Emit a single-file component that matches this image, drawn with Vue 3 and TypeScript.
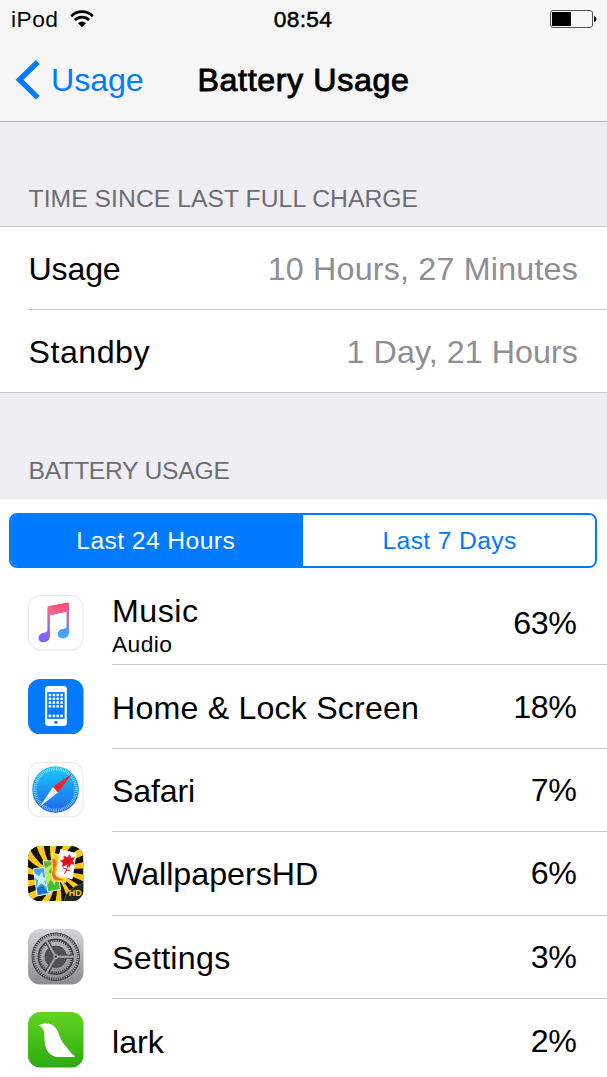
<script setup lang="ts">
import { ref } from 'vue'

interface AppRow {
  id: string
  name: string
  detail?: string
  percent: string
}

const times = [
  { id: 'usage', label: 'Usage', value: '10 Hours, 27 Minutes' },
  { id: 'standby', label: 'Standby', value: '1 Day, 21 Hours' },
]

const tabs = [
  { id: 'day', label: 'Last 24 Hours' },
  { id: 'week', label: 'Last 7 Days' },
]
const activeTab = ref('day')

const apps: AppRow[] = [
  { id: 'music', name: 'Music', detail: 'Audio', percent: '63%' },
  { id: 'home', name: 'Home & Lock Screen', percent: '18%' },
  { id: 'safari', name: 'Safari', percent: '7%' },
  { id: 'wallpapers', name: 'WallpapersHD', percent: '6%' },
  { id: 'settings', name: 'Settings', percent: '3%' },
  { id: 'lark', name: 'lark', percent: '2%' },
]

const dotCols = [21.7, 25.6, 29.4, 33.3]
const dotRows = [15.8, 19.6, 23.3, 27, 36.5]

// Curved sunburst wedges around the centre of the wallpaper icon.
const rays = Array.from({ length: 14 }, (_, i) => {
  const point = (r: number, deg: number) => {
    const t = (deg * Math.PI) / 180
    return `${(27.5 + r * Math.cos(t)).toFixed(2)} ${(28 + r * Math.sin(t)).toFixed(2)}`
  }
  const a = (i * 360) / 14
  return `M27.5 28Q${point(22, a - 12)} ${point(42, a + 8)}L${point(42, a + 21)}Q${point(22, a + 1)} 27.5 28Z`
})
</script>

<template>
  <main class="screen">
    <header class="top">
      <div class="status">
        <div class="carrier">
          <span>iPod</span>
          <svg class="wifi" width="24" height="18" viewBox="0 0 24 18">
            <path d="M1.2 6.2C7.3.2 16.7.2 22.8 6.2" />
            <path d="M4.9 10C9 6.1 15 6.1 19.1 10" />
            <path class="wifi-dot" d="M8 13.2Q12 9.8 16 13.2L12 17.2Z" />
          </svg>
        </div>
        <span class="clock">08:54</span>
        <svg class="battery" width="48" height="20" viewBox="0 0 48 20">
          <rect x="1.5" y="1.5" width="42" height="17" rx="2.5" />
          <path d="M3 3H22V17H3Z" />
          <path d="M45 7Q47.5 7.5 47.5 10T45 13Z" />
        </svg>
      </div>
      <nav class="nav">
        <a class="back">
          <svg width="26" height="40" viewBox="0 0 26 40"><path d="M23.8 2L5.5 19.8 23.8 37.6" /></svg>
          <span>Usage</span>
        </a>
        <h1>Battery Usage</h1>
      </nav>
    </header>

    <h2 class="caption caption-time">TIME SINCE LAST FULL CHARGE</h2>
    <section class="times">
      <div v-for="t in times" :key="t.id" class="time-row">
        <span :class="['label', t.id]">{{ t.label }}</span>
        <span :class="['value', t.id]">{{ t.value }}</span>
      </div>
    </section>

    <h2 class="caption caption-battery">BATTERY USAGE</h2>
    <section class="usage-list">
      <div class="segments">
        <button
          v-for="t in tabs"
          :key="t.id"
          :class="[t.id, { active: t.id === activeTab }]"
          @click="activeTab = t.id"
        >{{ t.label }}</button>
      </div>

      <div v-for="app in apps" :key="app.id" class="app-row">
        <svg class="icon" width="55.5" height="55.5" viewBox="0 0 55 55">
          <defs>
            <clipPath :id="`clip-${app.id}`"><rect width="55" height="55" rx="12" /></clipPath>
          </defs>

          <template v-if="app.id === 'music'">
            <defs>
              <linearGradient id="note" x1="0.6" y1="0" x2="0.4" y2="1">
                <stop offset="0" stop-color="#fb5067" />
                <stop offset="0.28" stop-color="#f4629a" />
                <stop offset="0.58" stop-color="#a568e8" />
                <stop offset="1" stop-color="#7a62ff" />
              </linearGradient>
              <linearGradient id="note-right" x1="0" y1="0" x2="0" y2="1">
                <stop offset="0" stop-color="#f6557f" />
                <stop offset="0.5" stop-color="#a172e6" />
                <stop offset="0.8" stop-color="#4e9df8" />
                <stop offset="1" stop-color="#3eb2fa" />
              </linearGradient>
            </defs>
            <rect x="0.6" y="0.6" width="53.8" height="53.8" rx="11.6" fill="#fff" stroke="#ececec" stroke-width="1.2" />
            <path fill="url(#note)" d="M19.2 13.2Q19.2 11.3 21 10.9L39 7.4Q40.7 7.1 40.7 8.8V16.2L21.7 20.3V40.5C21.7 44.5 19 46.7 15.5 46.8C12.2 46.9 10.3 44.9 10.5 42.1C10.7 39.2 13 37.8 16 37.3C18.4 36.9 19.2 36.5 19.2 34.2Z" />
            <path fill="url(#note-right)" d="M38.2 9.5L40.7 8.5V36.6C40.7 40.5 38.3 42.8 34.8 43C31.5 43.1 29.4 41.1 29.6 38.4C29.8 35.4 32 34 35 33.5C37.4 33.1 38.2 32.6 38.2 30.4Z" />
          </template>

          <template v-else-if="app.id === 'home'">
            <rect width="55" height="55" rx="12" fill="#027aff" />
            <rect x="17" y="7" width="21.5" height="39.5" rx="3.2" fill="#fff" />
            <rect x="19" y="13" width="17.3" height="26.5" fill="#027aff" />
            <template v-for="y in dotRows" :key="y">
              <rect v-for="x in dotCols" :key="x" :x="x - 1.2" :y="y - 1.2" width="2.5" height="2.5" fill="#fff" />
            </template>
            <rect x="25" y="9.6" width="5.5" height="0.7" fill="#a5d0ff" />
            <ellipse cx="27.7" cy="42.8" rx="1.8" ry="1.5" fill="#027aff" />
          </template>

          <template v-else-if="app.id === 'safari'">
            <defs>
              <linearGradient id="compass" x1="0" y1="0" x2="0" y2="1">
                <stop offset="0" stop-color="#1cc8fb" />
                <stop offset="1" stop-color="#1d66ee" />
              </linearGradient>
            </defs>
            <rect x="0.6" y="0.6" width="53.8" height="53.8" rx="11.6" fill="#fff" stroke="#ececec" stroke-width="1.2" />
            <circle cx="27.3" cy="27.3" r="23.1" fill="url(#compass)" />
            <circle cx="27.3" cy="27.3" r="20.4" fill="none" stroke="#d8f2ff" stroke-width="3" stroke-dasharray="0.7 1.08" opacity="0.8" />
            <path d="M43.8 11.3L29.8 30L24.7 24.8Z" fill="#fb1e24" />
            <path d="M12.2 43.6L29.8 30L24.7 24.8Z" fill="#fff" />
            <path d="M12.2 43.6L29.8 30L27.2 27.4Z" fill="#e6edf8" />
            <path d="M43.8 11.3L29.8 30L27.2 27.4Z" fill="#e02833" />
          </template>

          <template v-else-if="app.id === 'wallpapers'">
            <g clip-path="url(#clip-wallpapers)">
              <rect width="55" height="55" fill="#15120b" />
              <path v-for="d in rays" :key="d" :d="d" fill="#fcc71f" />
              <g stroke-width="0.9" stroke-linejoin="round">
                <path d="M5.5 22.5L18.5 21L22.5 47L9 49.5Z" fill="#38a7e5" stroke="#fff" />
                <path d="M7 27l4 3 3-5 1 6 5 1-4 3 3 6-6-4-4 4 1-7-3-2z" fill="#c5f0fa" />
                <path d="M9 42l5-3 6 7-10 2z" fill="#1c72c5" />
                <path d="M15 14.5L27 15L32.5 43L19.5 45.5Z" fill="#52b832" stroke="#fff" />
                <path d="M16.5 23q5-5 8-4l-4 7 8 4-2 9-4-6-3 6z" fill="#b8ee60" />
                <path d="M23.5 7L35.5 9.5L37.5 36L24 34.5Z" fill="#ffd428" stroke="#ffe97a" />
                <path d="M24 13q7 0 3 9t10 12l-10 0q-5-4-2-11z" fill="#f36a22" />
                <path d="M32.3 3.5L47.6 7.5L43.7 32.5L28.3 29.2Z" fill="#fff" stroke="#fff" />
              </g>
              <path d="M39.3 18.2L34.2 20.3 34.8 16.9 32.3 14.5 35.8 13.5 35.7 9.8 38.8 11.7 41.2 8.6 42.5 12.1 46 11.6 44.1 14.6 45.7 18 42.2 17.8 40.8 21.3Z" fill="#e21621" stroke="#e21621" stroke-width="0.8" stroke-linejoin="round" />
              <path d="M37.5 12.5l2 3 3-2m-3 2l-3 2" fill="none" stroke="#930e16" stroke-width="0.7" />
              <path d="M39.3 18Q39.5 23 36 27.5M38.5 23.2L34.5 21.5M38 24.2L41.5 24" fill="none" stroke="#d42630" stroke-width="1" />
              <path d="M35.5 55Q38 41.5 55 37V55Z" fill="#262629" />
              <path d="M35.5 55Q38 41.5 55 37" fill="none" stroke="#66625a" stroke-width="0.7" />
              <text x="40.5" y="50" textLength="12.5" lengthAdjust="spacingAndGlyphs" class="hd">HD</text>
            </g>
          </template>

          <template v-else-if="app.id === 'settings'">
            <defs>
              <linearGradient id="steel" x1="0" y1="0" x2="0" y2="1">
                <stop offset="0" stop-color="#d3d5d8" />
                <stop offset="1" stop-color="#8b8c91" />
              </linearGradient>
              <linearGradient id="gear" x1="0" y1="0" x2="0" y2="1">
                <stop offset="0" stop-color="#b2b4b7" />
                <stop offset="1" stop-color="#929397" />
              </linearGradient>
            </defs>
            <rect width="55" height="55" rx="12" fill="url(#steel)" />
            <circle cx="27.5" cy="27.5" r="24" fill="#434448" />
            <g fill="none" stroke="url(#gear)">
              <circle cx="27.5" cy="27.5" r="21.9" stroke-width="2.3" stroke-dasharray="1.15 1.144" />
              <circle cx="27.5" cy="27.5" r="19.5" stroke-width="3" />
              <circle cx="27.5" cy="27.5" r="15.4" stroke-width="1.8" stroke-dasharray="1.1 1.08" />
              <circle cx="27.5" cy="27.5" r="12.8" stroke-width="4" />
            </g>
            <circle cx="27.5" cy="27.5" r="10.9" fill="#505155" />
            <g stroke="#4c4d51" stroke-width="4.4">
              <path d="M38 27.5H45.5M22.2 18.4L18.5 12M22.2 36.6L18.5 43" />
            </g>
            <g stroke="#a8a9ac" stroke-width="1.9">
              <path d="M27.5 27.5H46M27.5 27.5L18.2 11.5M27.5 27.5L18.2 43.5" />
            </g>
            <circle cx="27.5" cy="27.5" r="2.4" fill="#a8a9ac" />
            <circle cx="27.5" cy="27.5" r="1.2" fill="#4b4c50" />
          </template>

          <template v-else>
            <defs>
              <linearGradient id="leaf" x1="0" y1="0" x2="0" y2="1">
                <stop offset="0" stop-color="#64d321" />
                <stop offset="1" stop-color="#2baa12" />
              </linearGradient>
            </defs>
            <rect width="55" height="55" rx="12" fill="url(#leaf)" />
            <path fill="#fff" d="M9.5 13Q12.2 12.7 14.2 11.8C21 10.3 26.5 12.5 29.5 19C32 25.5 33 29 38 34.5C40.8 38 43 41.5 46.5 43.8Q46.3 44.5 45 44.5H28.5C20.5 43 17.5 37.5 16.7 30.5C16.1 24.5 16.5 19 14.5 16Q13 13.8 9.5 13Z" />
          </template>
        </svg>
        <div class="app-body">
          <div class="app-text">
            <span :class="['app-name', app.id]">{{ app.name }}</span>
            <span v-if="app.detail" class="detail">{{ app.detail }}</span>
          </div>
          <span class="percent">{{ app.percent }}</span>
        </div>
      </div>
    </section>
  </main>
</template>

<style>
body {
  margin: 0;
  overflow: hidden;
}
</style>

<style scoped>
.screen {
  width: 607px;
  height: 1077px;
  overflow: hidden;
  background: #efeef4;
  color: #000;
  font-family: "Liberation Sans", Arial, sans-serif;
  font-size: 32.2px;
  line-height: 38px;
}
.top {
  box-sizing: border-box;
  height: 122px;
  background: #f6f6f6;
  border-bottom: 1px solid #b4b4b7;
}
.status {
  display: grid;
  grid-template-columns: 1fr auto 1fr;
  align-items: center;
  height: 38px;
  padding: 0 10px 0 11px;
  font-size: 22.8px;
}
.carrier {
  display: flex;
  align-items: center;
  gap: 12px;
  letter-spacing: 0.45px;
}
.wifi {
  fill: none;
  stroke: #000;
  stroke-width: 2.7;
}
.wifi .wifi-dot {
  fill: #000;
  stroke: none;
}
.clock {
  margin-left: -2px;
  -webkit-text-stroke: 0.5px #000;
  letter-spacing: 0.25px;
}
.battery {
  justify-self: end;
}
.battery rect {
  fill: none;
  stroke: #555;
  stroke-width: 1;
}
.nav {
  display: grid;
  grid-template-columns: 1fr auto 1fr;
  align-items: center;
  height: 83px;
  padding: 0 14px;
}
.back {
  display: flex;
  align-items: center;
  gap: 11px;
  color: #007aff;
  letter-spacing: -0.1px;
}
.back svg {
  fill: none;
  stroke: #007aff;
  stroke-width: 5.4;
}
h1 {
  margin: 0;
  font-size: 32.2px;
  font-weight: 400;
  letter-spacing: 0.62px;
  -webkit-text-stroke: 0.9px #000;
}
.caption {
  box-sizing: border-box;
  margin: 0;
  padding-left: 28.5px;
  color: #6d6d72;
  font-size: 24.7px;
  font-weight: 400;
  line-height: 30px;
}
.caption-time {
  height: 104px;
  padding-top: 62px;
  letter-spacing: 0.05px;
}
.caption-battery {
  height: 106px;
  padding-top: 63px;
  letter-spacing: -0.25px;
}
.times {
  box-sizing: border-box;
  height: 167px;
  border-top: 1px solid #c8c7cc;
  border-bottom: 1px solid #c8c7cc;
  background: #fff;
}
.time-row {
  display: flex;
  box-sizing: border-box;
  align-items: center;
  justify-content: space-between;
  height: 82px;
  margin-left: 28px;
  padding: 2px 29px 0 0;
}
.time-row + .time-row {
  height: 83px;
  border-top: 1px solid #c8c7cc;
}
.label.usage {
  padding-left: 0.5px;
  letter-spacing: -0.2px;
}
.label.standby {
  padding-left: 0.5px;
  letter-spacing: 0.5px;
}
.value {
  color: #8e8e93;
  letter-spacing: 0.22px;
}
.value.standby {
  letter-spacing: 0.08px;
}
.usage-list {
  padding-top: 14px;
  background: #fff;
}
.segments {
  display: grid;
  grid-template-columns: 1fr 1fr;
  box-sizing: border-box;
  height: 55px;
  margin: 0 10px 14px 9.4px;
  overflow: hidden;
  border: 2px solid #007aff;
  border-radius: 8px;
}
.segments button {
  padding: 0;
  border: 0;
  background: #fff;
  color: #007aff;
  font: inherit;
  font-size: 24.7px;
  letter-spacing: 0.35px;
}
.segments .week {
  padding-left: 1px;
}
.segments .day {
  padding-right: 3px;
  letter-spacing: 0.4px;
}
.segments .active {
  background: #007aff;
  color: #fff;
}
.app-row {
  display: flex;
  align-items: center;
  height: 83.4px;
  padding-left: 28.2px;
}
.icon {
  flex: none;
  margin: 0 28.3px 1px 0;
}
.hd {
  fill: #f7d52d;
  font: bold 9px "Liberation Sans", sans-serif;
}
.app-body {
  display: flex;
  box-sizing: border-box;
  flex: 1;
  align-items: center;
  justify-content: space-between;
  height: 100%;
  padding-right: 30.5px;
  border-bottom: 1px solid #c8c7cc;
}
.app-row:last-child .app-body {
  border-bottom: 0;
}
.app-text {
  display: flex;
  flex-direction: column;
  padding-top: 2px;
}
.app-name.music {
  padding-top: 2px;
  letter-spacing: 0.5px;
}
.app-name.home {
  letter-spacing: 0.17px;
}
.app-name.safari {
  letter-spacing: -0.2px;
}
.app-name.settings {
  letter-spacing: 0.28px;
}
.detail {
  font-size: 22.8px;
  line-height: 28px;
  letter-spacing: 0.4px;
}
.percent {
  letter-spacing: -0.35px;
}
</style>
